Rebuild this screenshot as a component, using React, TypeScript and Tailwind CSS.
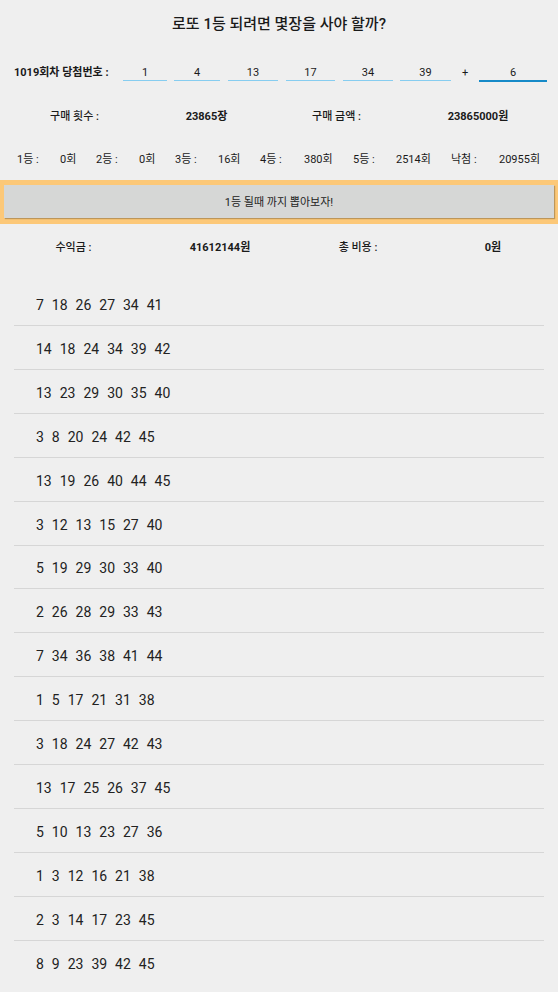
import React from "react";

const WIN = [1, 4, 13, 17, 34, 39];
const BONUS = 6;

// [label, count, labelWidth, countWidth]
const RANKS: [string, string, number, number][] = [
  ["1등 :", "0회", 43, 36],
  ["2등 :", "0회", 43, 36],
  ["3등 :", "16회", 43, 42],
  ["4등 :", "380회", 44, 49],
  ["5등 :", "2514회", 43, 55],
  ["낙첨 :", "20955회", 48, 50],
];

const PICKS = [
  "7 18 26 27 34 41",
  "14 18 24 34 39 42",
  "13 23 29 30 35 40",
  "3 8 20 24 42 45",
  "13 19 26 40 44 45",
  "3 12 13 15 27 40",
  "5 19 29 30 33 40",
  "2 26 28 29 33 43",
  "7 34 36 38 41 44",
  "1 5 17 21 31 38",
  "3 18 24 27 42 43",
  "13 17 25 26 37 45",
  "5 10 13 23 27 36",
  "1 3 12 16 21 38",
  "2 3 14 17 23 45",
  "8 9 23 39 42 45",
];

// underline input widths/margins, left to right
const INPUT_W = [44, 46, 50, 49, 50, 51];
const INPUT_GAP = [0, 7, 8, 8, 8, 7];

export default function App() {
  return (
    <div
      className="h-[992px] w-[558px] overflow-hidden bg-[#efefef] text-[#1a1a1a]"
      style={{ fontFamily: 'Roboto, "Noto Sans CJK KR", sans-serif' }}
    >
      <h1 className="flex h-[48px] items-center justify-center text-[15px] font-medium">
        로또 1등 되려면 몇장을 사야 할까?
      </h1>

      {/* winning numbers */}
      <div className="flex h-[46px] items-center pl-[14px] pt-[4px]">
        <span className="w-[109px] text-[11px] font-bold">1019회차 당첨번호 :</span>
        {WIN.map((n, i) => (
          <div
            key={i}
            className="flex h-[16px] items-center justify-center border-b border-[#86cdf0] pt-[2px] text-[11px]"
            style={{ width: INPUT_W[i], marginLeft: INPUT_GAP[i] }}
          >
            {n}
          </div>
        ))}
        <span className="w-[28px] text-center text-[11px]">+</span>
        <div className="mt-[1px] flex h-[17px] w-[68px] items-center justify-center border-b-2 border-[#168ac8] pt-[2px] text-[11px]">
          {BONUS}
        </div>
      </div>

      {/* purchase count / amount */}
      <div className="grid h-[42px] grid-cols-[149px_115px_145px_138px] items-center pt-[4px] text-center text-[11px]">
        <span className="font-medium">구매 횟수 :</span>
        <span className="font-bold">23865장</span>
        <span className="font-medium">구매 금액 :</span>
        <span className="font-bold">23865000원</span>
      </div>

      {/* rank counts */}
      <div className="flex h-[44px] items-center whitespace-nowrap pl-[17px] pt-[4px] text-[11px]">
        {RANKS.map(([label, count, lw, cw], i) => (
          <div key={i} className="flex items-center">
            <span style={{ width: lw }}>{label}</span>
            <span style={{ width: cw }}>{count}</span>
          </div>
        ))}
      </div>

      {/* draw button */}
      <div className="bg-[#fcc878] pb-[6px] pl-[4px] pr-[4px] pt-[5px]">
        <button
          type="button"
          className="flex h-[33px] w-full items-center justify-center bg-[#d6d7d6] pt-[3px] text-[11px] text-[#222] shadow-[1px_1px_1px_rgba(0,0,0,0.25)]"
        >
          1등 될때 까지 뽑아보자!
        </button>
      </div>

      {/* profit / cost */}
      <div className="grid h-[44px] grid-cols-[147px_146px_130px_140px] items-center pt-[4px] text-center text-[11px]">
        <span className="font-medium">수익금 :</span>
        <span className="font-bold">41612144원</span>
        <span className="font-medium">총 비용 :</span>
        <span className="font-bold">0원</span>
      </div>

      {/* picked tickets */}
      <ul className="mt-[14px] px-[14px]">
        {PICKS.map((p, i) => (
          <li
            key={i}
            className="flex h-[43.93px] items-center border-b border-[#d6d6d6] pl-[22px] pt-[4px] text-[14px] text-[#222] [word-spacing:4.5px] last:border-b-0"
          >
            {p}
          </li>
        ))}
      </ul>
    </div>
  );
}
